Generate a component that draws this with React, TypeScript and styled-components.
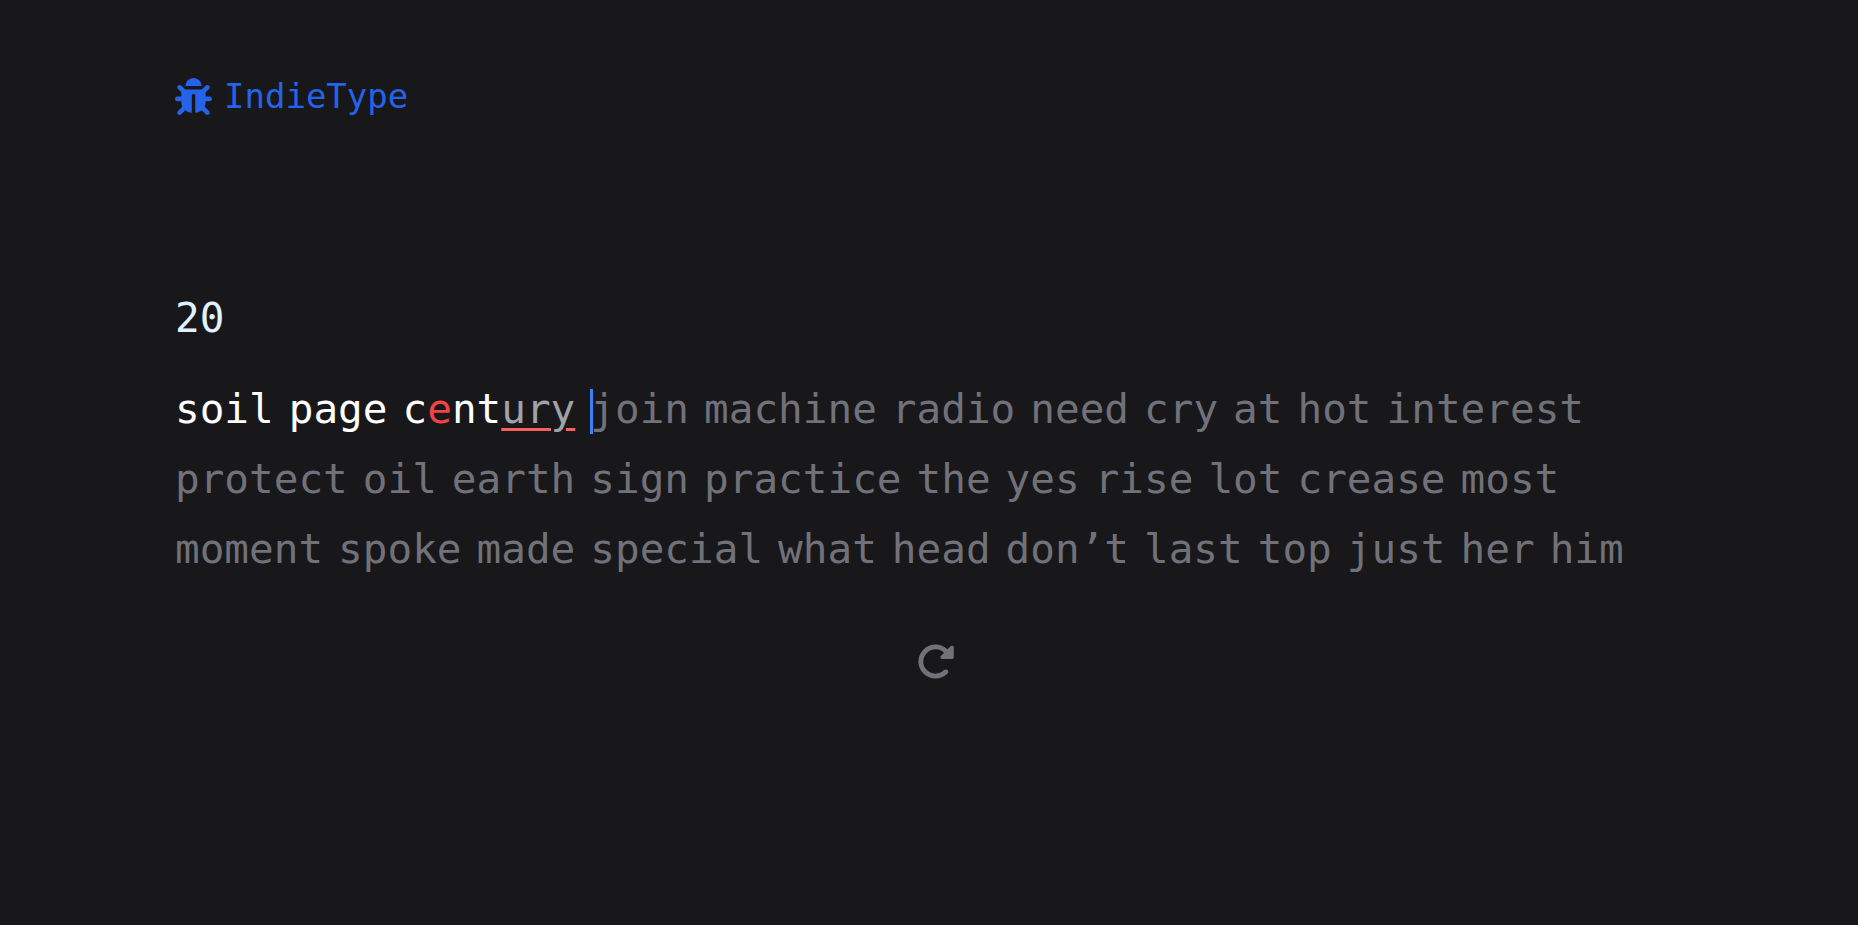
import styled, { createGlobalStyle, css } from "styled-components";
import { FaBug } from "react-icons/fa";
import { FaRotateRight } from "react-icons/fa6";

type LetterState = "pending" | "correct" | "wrong" | "missed";

const GlobalStyle = createGlobalStyle`
  * { box-sizing: border-box; }
  body {
    margin: 0;
    background: #18181b;
    font-family: Consolas, "DejaVu Sans Mono", monospace;
  }
`;

const Page = styled.div`
  min-height: 100vh;
  padding: 72px 163px 72px 175px;
  background: #18181b;
  color: #71717a;
`;

const Header = styled.header`
  display: flex;
`;

const Logo = styled.a`
  display: flex;
  align-items: center;
  gap: 12px;
  color: #2563eb;
  font-size: 34px;
  line-height: 48px;
  text-decoration: none;

  svg { width: 37px; height: 37px; }
`;

const Main = styled.main`
  display: flex;
  flex-direction: column;
  margin-top: 168px;
`;

const Timer = styled.div`
  color: #e0f2fe;
  font-size: 41px;
  line-height: 60px;
`;

const Words = styled.div`
  display: flex;
  flex-wrap: wrap;
  column-gap: 15px;
  margin-top: 26px;
  font-size: 41px;
  line-height: 70px;
`;

const Word = styled.span`
  position: relative;
  white-space: nowrap;
`;

const letterStyles = {
  pending: css`color: #71717a;`,
  correct: css`color: #ffffff;`,
  wrong: css`color: #ef4444;`,
  missed: css`
    color: #a1a1aa;
    text-decoration: underline 3px #f86060;
    text-underline-offset: 5px;
  `,
};

const Letters = styled.span<{ $state: LetterState }>`
  ${({ $state }) => letterStyles[$state]}
`;

const Caret = styled.span`
  position: absolute;
  top: 15px;
  left: 0;
  width: 3px;
  height: 45px;
  background: #3b82f6;
`;

const Restart = styled.button`
  display: flex;
  align-self: center;
  margin-top: 58px;
  padding: 0;
  border: 0;
  background: none;
  color: #71717a;
  cursor: pointer;

  svg { width: 39px; height: 39px; }
`;

const typed: [string, LetterState][][] = [
  [["soil", "correct"]],
  [["page", "correct"]],
  [["c", "correct"], ["e", "wrong"], ["nt", "correct"], ["ury", "missed"]],
];

const upcoming =
  "join machine radio need cry at hot interest protect oil earth sign practice the yes rise lot crease most moment spoke made special what head don’t last top just her him".split(" ");

export default function App() {
  return (
    <Page>
      <GlobalStyle />
      <Header>
        <Logo href="#">
          <FaBug aria-hidden="true" />
          IndieType
        </Logo>
      </Header>
      <Main>
        <Timer>20</Timer>
        <Words>
          {typed.map((parts, i) => (
            <Word key={i}>
              {parts.map(([text, state], j) => (
                <Letters key={j} $state={state}>{text}</Letters>
              ))}
            </Word>
          ))}
          {upcoming.map((word, i) => (
            <Word key={word}>
              {i === 0 && <Caret />}
              <Letters $state="pending">{word}</Letters>
            </Word>
          ))}
        </Words>
        <Restart aria-label="Restart test">
          <FaRotateRight aria-hidden="true" />
        </Restart>
      </Main>
    </Page>
  );
}
